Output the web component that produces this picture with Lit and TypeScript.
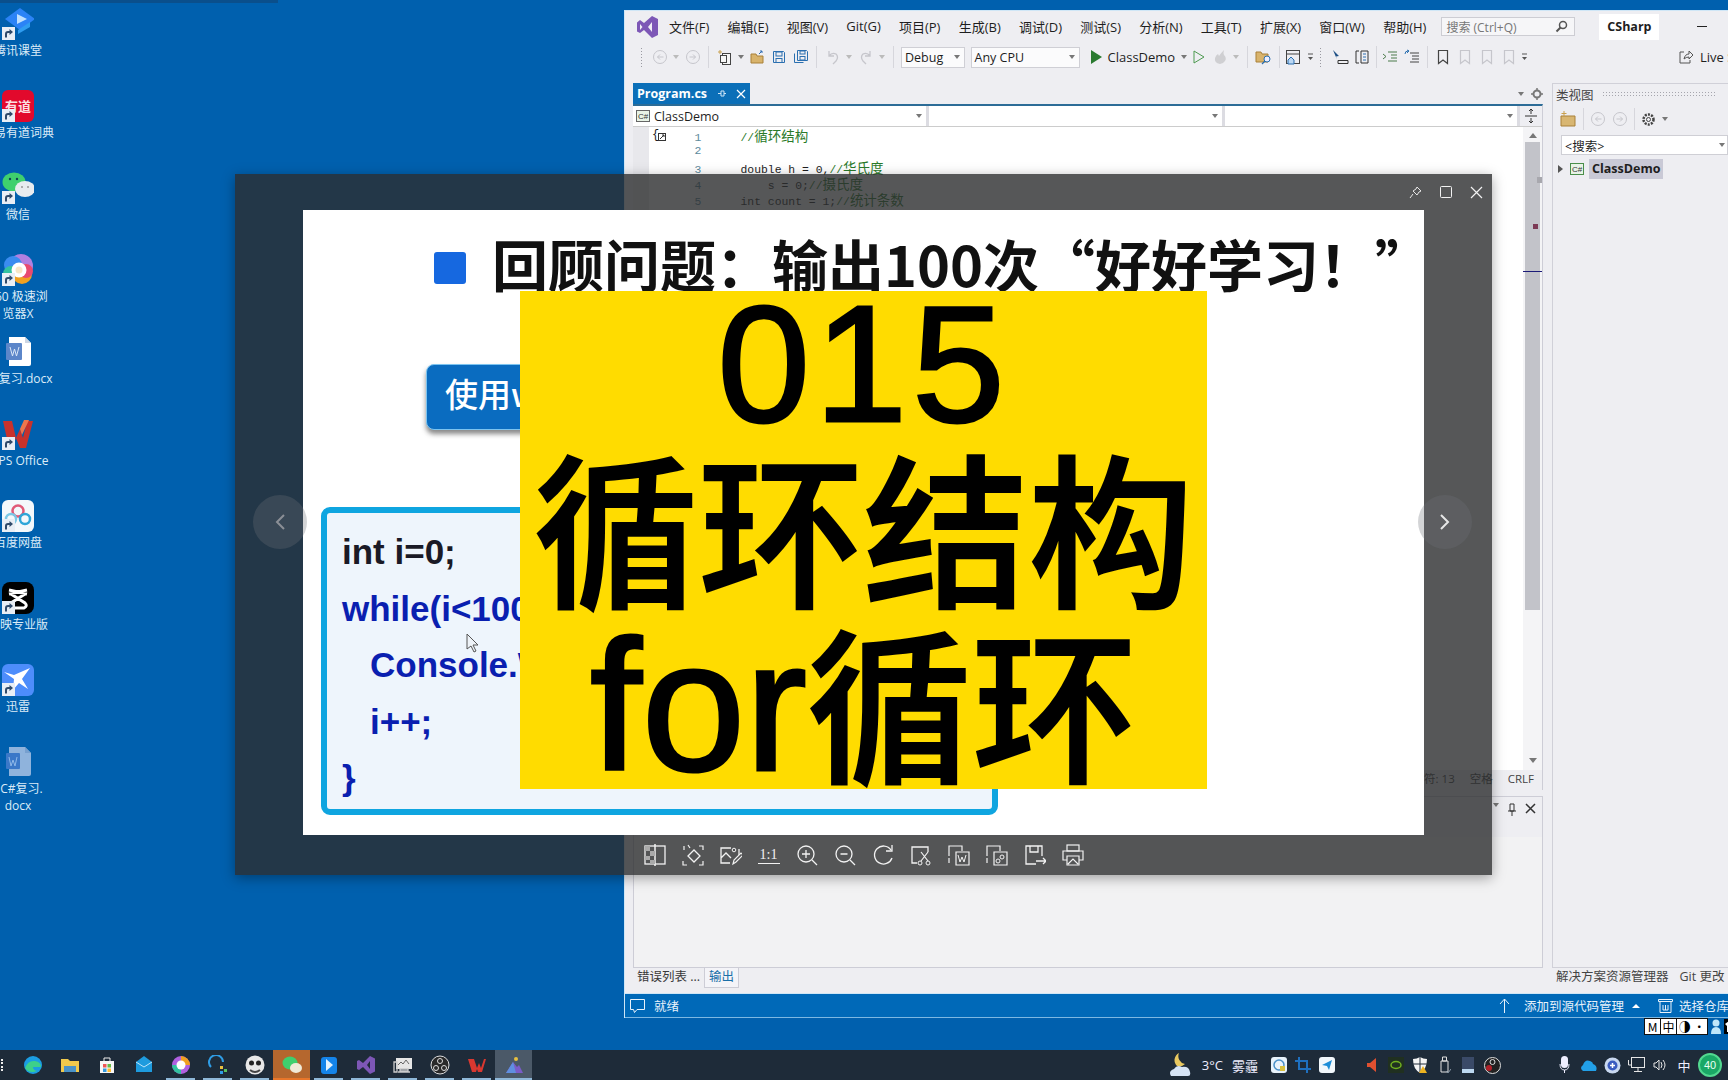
import { LitElement, html, svg, css } from "lit";
import { customElement } from "lit/decorators.js";

const mk = (w: number, h: number, body: unknown, vb = `0 0 ${w} ${h}`) =>
  html`<svg width=${w} height=${h} viewBox=${vb} fill="none">${body}</svg>`;

// ---- desktop icons ----
const shortcut = html`<svg class="sc" width="13" height="13" viewBox="0 0 13 13"><rect width="13" height="13" fill="#e8eef5"/><path d="M3 10.500V7q0-3 3-3h1.500V2L11 5 7.500 8V6H6q-1 0-1 1v3.500z" fill="#2f4a6a"/></svg>`;

const deskIcons: { label: string[]; art: unknown; sc?: boolean }[] = [
  {
    label: ["腾讯课堂"],
    art: mk(32, 32, svg`<path d="M18 0l15 11-15 11L3 11z" fill="#2b83f6"/><path d="M15 6l10 5-10 5z" fill="#bfe0ff"/><path d="M16 26l12-7v-5l-12 8z" fill="#2f9df0"/>`),
  },
  {
    label: ["网易有道词典"],
    art: html`<div class="yd">有道</div>`,
  },
  {
    label: ["微信"],
    art: mk(32, 32, svg`<ellipse cx="12" cy="10" rx="11.500" ry="9.500" fill="#3fd06e"/><ellipse cx="23" cy="17" rx="10" ry="8" fill="#e8ecef"/><circle cx="8" cy="7" r="1.200" fill="#145"/><circle cx="15" cy="7" r="1.200" fill="#145"/><circle cx="20" cy="15" r="1" fill="#999"/><circle cx="26" cy="15" r="1" fill="#999"/>`),
  },
  {
    label: ["360 极速浏", "览器X"],
    art: mk(32, 32, svg`<circle cx="19" cy="12" r="12" fill="#b080e0"/><circle cx="11" cy="11" r="9" fill="#3a8cf0"/><circle cx="9" cy="20" r="8" fill="#33c2a0"/><circle cx="20" cy="20" r="10" fill="#f0a020"/><circle cx="24" cy="17" r="7" fill="#e84a70"/><circle cx="17" cy="16" r="7.500" fill="#fff"/><circle cx="17" cy="16" r="3.500" fill="#f6e7c8"/>`),
  },
  {
    label: ["C#复习.docx"],
    sc: false,
    art: mk(32, 32, svg`<path d="M7 1h16l6 6v21q0 2-2 2H7z" fill="#fff"/><path d="M23 1l6 6h-6z" fill="#cdd6e4"/><rect x="4" y="7" width="16" height="17" rx="1" fill="#5c86c9"/><path d="M8 11l2.500 9 2-7 2 7L17 11" stroke="#dbe7f7" stroke-width="1"/>`),
  },
  {
    label: ["WPS Office"],
    art: mk(32, 32, svg`<path d="M1 3h9l4 17 4-9 3 9 4-17h6l-7 27h-6l-4-10-4 10H7z" fill="#c8322c"/><path d="M18 11l4-9h5l-7 15z" fill="#f0764c"/>`),
  },
  {
    label: ["百度网盘"],
    art: html`<div class="tile white">${mk(32, 32, svg`<circle cx="16" cy="11" r="5.500" stroke="#e05a78" stroke-width="2.500"/><circle cx="23" cy="19" r="5" stroke="#2fa6d8" stroke-width="2.500"/><circle cx="9" cy="19" r="5" stroke="#7cc8e6" stroke-width="2.500"/>`)}</div>`,
  },
  {
    label: ["剪映专业版"],
    art: html`<div class="tile black">${mk(32, 32, svg`<path d="M7 8l18 4M25 8L7 12M9 12l14 9q3 3-1 5H10q-4-2-1-5l14-9" stroke="#fff" stroke-width="3"/>`)}</div>`,
  },
  {
    label: ["迅雷"],
    art: html`<div class="tile xl">${mk(32, 32, svg`<path d="M2 8l10 3L28 4 20 15l6 10-9-6-6 7 1-11z" fill="#fff"/>`)}</div>`,
  },
  {
    label: ["$C#复习.", "docx"],
    sc: false,
    art: mk(32, 32, svg`<path d="M7 1h16l6 6v21q0 2-2 2H7z" fill="#8fb3dc"/><path d="M23 1l6 6h-6z" fill="#77a0cf"/><rect x="4" y="7" width="14" height="16" rx="1" fill="#3b78c8"/><path d="M7 11l2 9 2-6 2 6 2-9" stroke="#8fb8e8" stroke-width="1"/>`),
  },
];

@customElement("desktop-icons")
export class DesktopIcons extends LitElement {
  static styles = css`
    :host { position: absolute; left: -37px; top: 8px; display: flex; flex-direction: column; width: 110px; }
    .item { height: 82px; display: flex; flex-direction: column; align-items: center; }
    .art { position: relative; width: 32px; height: 32px; margin-bottom: 2px; flex: none; }
    svg { display: block; }
    .sc { position: absolute; left: 0; bottom: 0; }
    .label { color: #dcecf8; font-size: 12px; line-height: 17px; text-align: center; white-space: nowrap; }
    .yd { width: 32px; height: 32px; border-radius: 6px; background: #e2092c; color: #fbdfe2; font: 700 13px/32px "Noto Sans CJK SC", sans-serif; text-align: center; }
    .tile { width: 32px; height: 32px; border-radius: 6px; overflow: hidden; }
    .white { background: #f4f8fb; }
    .black { background: #000; border-radius: 8px; }
    .xl { background: #4d8dfb; }
  `;
  render() {
    return deskIcons.map(
      (d) => html`<div class="item">
        <div class="art">${d.art}${d.sc === false ? "" : shortcut}</div>
        ${d.label.map((l) => html`<div class="label">${l}</div>`)}
      </div>`
    );
  }
}

// ---- visual studio ----
const dim = "#c6c6cc";
const ic = {
  back: (c: string) => mk(16, 16, svg`<circle cx="8" cy="8" r="6.500" stroke=${c}/><path d="M11.500 8h-6M8 5.500L5.500 8 8 10.500" stroke=${c}/>`),
  fwd: (c: string) => mk(16, 16, svg`<circle cx="8" cy="8" r="6.500" stroke=${c}/><path d="M4.500 8h6M8 5.500L10.500 8 8 10.500" stroke=${c}/>`),
  newProj: mk(16, 16, svg`<rect x="5.500" y="4.500" width="8" height="11" fill="#f6f6f6" stroke="#444"/><rect x="3.500" y="6.500" width="6" height="7" fill="#f6f6f6" stroke="#444"/><path d="M3 1v4M1 3h4" stroke="#c9a04e"/>`),
  folder: mk(16, 16, svg`<path d="M1 5h5l1 2h6v7H1z" fill="#d8b36c" stroke="#a98038"/><path d="M9 5l3-3M12 2h-2M12 2v2" stroke="#2f6db3"/>`),
  save: mk(16, 16, svg`<path d="M2.500 2.500h10l1 1v10h-11z" stroke="#2a6fb0"/><rect x="5" y="3" width="6" height="4" stroke="#2a6fb0"/><rect x="5" y="9.500" width="6" height="4" stroke="#2a6fb0"/>`),
  saveAll: mk(16, 16, svg`<path d="M1.500 4.500v9h9M4.500 1.500h9l1 1v9h-10z" stroke="#2a6fb0"/><rect x="7" y="2" width="5" height="3" stroke="#2a6fb0"/><rect x="7" y="7.500" width="5" height="3.500" stroke="#2a6fb0"/>`),
  undo: mk(16, 16, svg`<path d="M4 2v5h5M4 7q3-4 7-2 3 3 0 7l-3 3" stroke=${dim} stroke-width="1.300"/>`),
  redo: mk(16, 16, svg`<path d="M12 2v5H7M12 7q-3-4-7-2-3 3 0 7l3 3" stroke=${dim} stroke-width="1.300"/>`),
  play: mk(14, 16, svg`<path d="M1 1l11 7-11 7z" fill="#2a7a30"/>`),
  playO: mk(14, 16, svg`<path d="M2 2l10 6-10 6z" stroke="#4d9a50"/>`),
  flame: mk(16, 16, svg`<path d="M8 15q-6-1-5-6 1-3 3-4l1 2q2-3 5-6-1 3 0 5 3 3 1 6-2 3-5 3z" fill="#cfcfd2"/>`),
  folderFind: mk(18, 16, svg`<path d="M1 3h5l1 2h6v8H1z" fill="#d8b36c" stroke="#a98038"/><circle cx="12" cy="10" r="3" fill="#eef" stroke="#2a6fb0"/><path d="M10 12l-3 3" stroke="#2a6fb0" stroke-width="1.300"/>`),
  home: mk(16, 16, svg`<rect x="1.500" y="1.500" width="13" height="13" stroke="#444"/><path d="M1 5h14" stroke="#444"/><path d="M3 11l3-3 3 3v4H3z" fill="#bcd8f4" stroke="#2a6fb0"/>`),
  cursor: mk(18, 16, svg`<path d="M2 1l6 6-3 .5 1 3z" fill="#1d4f85"/><path d="M7 11.500h10v3H7z" stroke="#333"/>`),
  cols: mk(16, 16, svg`<path d="M5 2H2v12h3M7 2h7v12H7z" stroke="#333"/><path d="M9 5h3M9 8h3M9 11h3" stroke="#2a6fb0"/>`),
  indentA: mk(16, 16, svg`<path d="M6 3h9M9 6h6M9 9h6M6 12h9M1 5l3 2.500L1 10" stroke="#4b7a4b"/>`),
  indentB: mk(16, 16, svg`<path d="M6 4h9M8 7h7M8 10h7M6 13h9" stroke="#444"/><path d="M1 5q0-3 3-3h1M3 1L5 2 3 4" stroke="#2a6fb0"/>`),
  mark: (c: string) => mk(14, 16, svg`<path d="M2.500 1.500h9v13L7 11l-4.500 3.500z" stroke=${c} stroke-width="1.200"/>`),
  share: mk(16, 16, svg`<path d="M6 3H2v11h10v-3M6 10q1-5 5-5V2l4 4-4 4V8q-3 0-5 2z" stroke="#555"/>`),
  dd: html`<span class="dd"></span>`,
  ddLine: mk(7, 8, svg`<path d="M1 1h5" stroke="#555"/><path d="M1 4h5l-2.500 3z" fill="#555"/>`),
};
const vsLogo = mk(22, 24, svg`<path d="M16 1l6 3v16l-6 3-8-8-4 3-3-1.500v-9L4 5l4 3z" fill="#7d57b6"/><path d="M16 7l-4 5 4 5zM4 9v6l2.500-3z" fill="#f0eef5"/>`);
const csBadge = (c = "#4a8f4a") => mk(14, 12, svg`<rect x=".5" y=".5" width="13" height="11" fill="#e8f3e6" stroke=${c}/><text x="7" y="9" font-size="8" font-family="Liberation Sans" text-anchor="middle" fill="#333">C#</text>`);

const menus = ["文件(F)", "编辑(E)", "视图(V)", "Git(G)", "项目(P)", "生成(B)", "调试(D)", "测试(S)", "分析(N)", "工具(T)", "扩展(X)", "窗口(W)", "帮助(H)"];
const codeLines = [
  ["1", "", "//循环结构"],
  ["2", "", ""],
  ["3", "double h = 0,", "//华氏度"],
  ["4", "    s = 0;", "//摄氏度"],
  ["5", "int count = 1;", "//统计条数"],
];

@customElement("vs-window")
export class VsWindow extends LitElement {
  static styles = css`
    :host { position: absolute; left: 624px; top: 10px; right: 0; height: 1008px; display: flex; flex-direction: column; background: #eeeef2; color: #1e1e1e; font-size: 13px; border-top: 1px solid #cfe6f6; border-left: 1px solid #cfe6f6; box-sizing: border-box; overflow: hidden; }
    svg { display: block; flex: none; }
    .menu { height: 31px; flex: none; display: flex; align-items: center; padding-left: 11px; }
    .menu .logo { margin-right: 11px; }
    .items { display: flex; gap: 18.200px; white-space: nowrap; }
    .search { margin-left: 15px; width: 134px; height: 19px; box-sizing: border-box; background: #f6f6f8; border: 1px solid #cdcdd3; display: flex; align-items: center; justify-content: space-between; padding: 0 6px 0 4px; color: #777; font-size: 12px; white-space: nowrap; }
    .lang { margin-left: 24px; width: 60px; height: 26px; background: #fff; font-weight: 700; font-size: 12.500px; display: flex; align-items: center; justify-content: center; }
    .min { margin-left: 38px; width: 10px; border-top: 1px solid #222; }

    .tools { height: 30px; flex: none; display: flex; align-items: center; gap: 5.500px; padding-left: 15px; white-space: nowrap; }
    .grip { width: 3px; height: 20px; background-image: radial-gradient(#9a9aa2 .6px, transparent .8px); background-size: 3px 3px; margin-right: 3px; }
    .sep { width: 1px; height: 22px; background: #d6d6dc; margin: 0 2px; }
    .sep.tight { margin: 0; }
    .dd { width: 0; height: 0; border: 3.500px solid transparent; border-top: 4px solid #777; border-bottom: 0; display: block; flex: none; }
    .dd.off { border-top-color: #bbb; }
    .combo { height: 21px; box-sizing: border-box; background: #fbfbfc; border: 1px solid #cfcfd5; display: flex; align-items: center; justify-content: space-between; padding: 0 4px 0 3px; font-size: 12.500px; }
    .debug { width: 64px; }
    .cpu { width: 109px; margin-right: 5px; }
    .target { margin-left: -2px; }
    .marks { display: flex; gap: 8px; }
    .live { margin-left: auto; display: flex; gap: 6px; align-items: center; font-size: 13px; width: 50px; overflow: hidden; flex: none; }

    .body { flex: 1; display: flex; min-height: 0; padding: 11px 0 0 8px; }
    .main { width: 910px; flex: none; display: flex; flex-direction: column; }
    .tabbar { height: 21px; flex: none; display: flex; align-items: stretch; justify-content: space-between; }
    .tab { width: 117px; background: #0b6fb8; color: #fff; font-weight: 700; font-size: 12.500px; display: flex; align-items: center; padding-left: 4px; gap: 10px; box-sizing: border-box; }
    .wellbtns { display: flex; align-items: center; gap: 7px; padding-right: 0; }
    .doc { height: 686px; flex: none; border-top: 2px solid #2c6c97; border-right: 1px solid #cdcdd6; display: flex; flex-direction: column; box-sizing: border-box; background: #fff; }
    .nav { height: 20px; flex: none; display: flex; gap: 3px; background: #dcdce2; border-bottom: 1px solid #ccc; }
    .nav div { background: #fff; height: 20px; display: flex; align-items: center; justify-content: space-between; box-sizing: border-box; padding: 0 4px 0 3px; font-size: 12.500px; }
    .nav .a { width: 293px; gap: 4px; justify-content: flex-start; }
    .nav .a .name { flex: 1; }
    .nav .b { width: 293px; }
    .nav .c { width: 292px; }
    .nav .split { flex: 1; background: #eeeef2; justify-content: center; padding: 0; }
    .editor { flex: 1; display: flex; min-height: 0; }
    .margin { width: 16px; background: #e8e8ec; flex: none; }
    .outline { width: 14px; padding: 1px 0 0 3px; font: 12px/14px "Liberation Mono", monospace; flex: none; display: flex; align-items: flex-start; }
    .outline svg { margin: 5px 0 0 -1px; }
    .code { flex: 1; padding-top: 0; font: 11.400px/16px "Liberation Mono", "Noto Sans CJK SC", monospace; }
    .ln { display: flex; align-items: baseline; white-space: pre; height: 16px; }
    .ln i { font-style: normal; width: 25px; margin-left: 28.500px; margin-right: 21px; color: #5d8a9c; text-align: left; }
    .cm { color: #2a7a2a; }
    .cm b { font-weight: 400; font-size: 13.500px; line-height: 16px; font-family: "Noto Sans CJK SC", sans-serif; }
    .scroll { width: 19px; flex: none; background: #f4f4f6; position: relative; display: flex; flex-direction: column; align-items: center; padding-top: 6px; box-sizing: border-box; }
    .up { border: 4px solid transparent; border-bottom: 5px solid #777; border-top: 0; }
    .thumb { width: 15px; height: 468px; margin-top: 4px; background: #c2c3c9; flex: none; }
    .dn { margin-top: auto; margin-bottom: 7px; border: 4px solid transparent; border-top: 5px solid #777; border-bottom: 0; }
    .mk { position: absolute; }
    .mk.red { left: 10px; top: 97px; width: 5px; height: 5px; background: #7c3a55; }
    .mk.line { left: 0; top: 144px; width: 19px; height: 1px; background: #1b1b78; }
    .mk.gray { left: 14px; top: 50px; width: 5px; height: 6px; background: #a8a8ae; }
    .docfoot { height: 20px; flex: none; background: #eeeef2; display: flex; justify-content: flex-end; align-items: center; gap: 15px; padding-right: 8px; font-size: 11.500px; color: #444; line-height: 16px; padding-bottom: 3px; box-sizing: border-box; }
    .output { margin-top: 6px; height: 172px; flex: none; border: 1px solid #cdcdd6; background: #f2f2f3; box-sizing: border-box; }
    .ohead { height: 40px; background: #eeeef2; display: flex; justify-content: flex-end; gap: 8px; padding: 6px 6px 0 0; box-sizing: border-box; }
    .btabs { height: 22px; flex: none; display: flex; font-size: 12.500px; }
    .btabs span { padding: 0 4px; line-height: 18px; height: 20px; white-space: nowrap; color: #3a3a3a; }
    .btabs .on { background: #f4f4f8; color: #1a6fa8; border: 1px solid #cdcdd6; border-top: 0; box-sizing: border-box; }

    .side { margin-left: 9px; flex: 1; display: flex; flex-direction: column; min-width: 0; }
    .panel { height: 885px; flex: none; border: 1px solid #d0d0d8; border-width: 1px 0 1px 1px; box-sizing: border-box; background: #eeeef2; }
    .ptitle { height: 20px; display: flex; align-items: center; gap: 8px; padding: 0 0 0 3px; font-size: 12.500px; color: #444; white-space: nowrap; }
    .ptitle i { flex: 1; height: 7px; margin-right: 12px; background-image: radial-gradient(#a6a6ae .6px, transparent .8px); background-size: 3px 3px; }
    .ptools { height: 30px; display: flex; align-items: center; gap: 6px; padding-left: 6px; }
    .ptools .sep { margin: 0; }
    .psearch { margin: 1px 0 0 8px; height: 20px; background: #fff; border: 1px solid #cfcfd5; display: flex; align-items: center; justify-content: space-between; padding: 0 2px 0 3px; font-size: 12.500px; box-sizing: border-box; }
    .tree { display: flex; align-items: center; margin: 4px 0 0 5px; height: 20px; }
    .tree .tri { width: 0; height: 0; border: 4px solid transparent; border-left: 5px solid #555; border-right: 0; margin-right: 7px; }
    .tree b { margin-left: 5px; padding: 0 3px; background: #c9c9d6; font-size: 12.500px; line-height: 20px; }
    .stabs { height: 22px; display: flex; gap: 11px; padding-left: 4px; font-size: 12.500px; color: #444; line-height: 18px; white-space: nowrap; }

    .status { height: 25px; flex: none; background: #0069b8; color: #e8f2fb; display: flex; align-items: center; padding-left: 5px; font-size: 12.500px; white-space: nowrap; border-top: 1px solid #cfe6f6; border-bottom: 1px solid #7db8e2; box-sizing: border-box; margin-left: -1px; }
    .status .ready { margin-left: 8px; }
    .status .right { margin-left: auto; display: flex; align-items: center; gap: 6px; width: 229px; overflow: hidden; flex: none; }
    .status .right svg:first-child { margin-right: 8px; }
    .status .up2 { border: 4px solid transparent; border-bottom: 4px solid #fff; border-top: 0; margin: 0 12px 0 2px; }
  `;
  render() {
    return html`
      <div class="menu">
        <div class="logo">${vsLogo}</div>
        <div class="items">${menus.map((m) => html`<span>${m}</span>`)}</div>
        <div class="search"><span>搜索 (Ctrl+Q)</span>${mk(13, 13, svg`<circle cx="8" cy="5" r="3.500" stroke="#555" stroke-width="1.500"/><path d="M5.500 7.500L1.500 11.500" stroke="#555" stroke-width="2"/>`)}</div>
        <div class="lang">CSharp</div>
        <div class="min"></div>
      </div>
      <div class="tools">
        <span class="grip"></span>${ic.back(dim)}<span class="dd off"></span>${ic.fwd(dim)}<span class="sep"></span>
        ${ic.newProj}${ic.dd}${ic.folder}${ic.save}${ic.saveAll}<span class="sep"></span>
        ${ic.undo}<span class="dd off"></span>${ic.redo}<span class="dd off"></span><span class="sep"></span>
        <div class="combo debug"><span>Debug</span>${ic.dd}</div>
        <div class="combo cpu"><span>Any CPU</span>${ic.dd}</div>
        ${ic.play}<span class="target">ClassDemo</span>${ic.dd}${ic.playO}${ic.flame}<span class="dd off"></span><span class="sep"></span>
        ${ic.folderFind}<span class="sep tight"></span>${ic.home}${ic.ddLine}<span class="grip"></span>${ic.cursor}${ic.cols}<span class="sep tight"></span>
        ${ic.indentA}${ic.indentB}<span class="sep"></span>
        <div class="marks">${ic.mark("#444")}${ic.mark(dim)}${ic.mark(dim)}${ic.mark(dim)}</div>${ic.ddLine}
        <div class="live">${ic.share}<span>Live Share</span></div>
      </div>
      <div class="body">
        <div class="main">
          <div class="tabbar">
            <div class="tab"><span>Program.cs</span>
              ${mk(9, 9, svg`<path d="M1 4.500h3M4 2v5h3V2zM7 4.500h2" stroke="#cfe6f8"/>`)}
              ${mk(10, 10, svg`<path d="M1 1l8 8M9 1L1 9" stroke="#fff" stroke-width="1.200"/>`)}
            </div>
            <div class="wellbtns">${ic.dd}${mk(12, 12, svg`<circle cx="6" cy="6" r="3.500" stroke="#777" stroke-width="2"/><path d="M6 0v2M6 10v2M0 6h2M10 6h2" stroke="#777" stroke-width="1.500"/>`)}</div>
          </div>
          <div class="doc">
            <div class="nav">
              <div class="a">${csBadge("#666")}<span class="name">ClassDemo</span>${ic.dd}</div>
              <div class="b"><span></span>${ic.dd}</div>
              <div class="c"><span></span>${ic.dd}</div>
              <div class="split">${mk(12, 14, svg`<path d="M0 7h12M6 0v5M6 14V9M4 2l2-2 2 2M4 12l2 2 2-2" stroke="#333"/>`)}</div>
            </div>
            <div class="editor">
              <div class="margin"></div>
              <div class="outline">{${mk(8, 8, svg`<rect x=".5" y=".5" width="7" height="7" stroke="#333"/><path d="M2 6l4-4M4 2h2v2" stroke="#333"/>`)}</div>
              <div class="code">
                ${codeLines.map(([n, t, c]) => html`<div class="ln"><i>${n}</i><span>${t}</span>${this.comment(c)}</div>`)}
              </div>
              <div class="scroll">
                <span class="up"></span><div class="thumb"></div><span class="dn"></span>
                <span class="mk gray"></span><span class="mk red"></span><span class="mk line"></span>
              </div>
            </div>
            <div class="docfoot"><span>字符: 13</span><span>空格</span><span>CRLF</span></div>
          </div>
          <div class="output">
            <div class="ohead">${ic.dd}${mk(10, 14, svg`<path d="M3 1h4v7H3zM1 8h8M5 8v5" stroke="#333"/>`)}${mk(11, 11, svg`<path d="M1 1l9 9M10 1l-9 9" stroke="#333" stroke-width="1.500"/>`)}</div>
          </div>
          <div class="btabs"><span>错误列表 ...</span><span class="on">输出</span></div>
        </div>
        <div class="side">
          <div class="panel">
            <div class="ptitle"><span>类视图</span><i></i></div>
            <div class="ptools">
              ${mk(18, 18, svg`<path d="M2 6h14v10H2z" fill="#d8b672" stroke="#a98038"/><path d="M5 1v5M2.500 3.500h5" stroke="#c9a04e"/>`)}
              <span class="sep"></span>${ic.back(dim)}${ic.fwd(dim)}<span class="sep"></span>
              ${mk(15, 15, svg`<circle cx="7.500" cy="7.500" r="5" stroke="#444" stroke-dasharray="2 1.200" stroke-width="2.500"/><circle cx="7.500" cy="7.500" r="2" stroke="#444"/>`)}${ic.dd}
            </div>
            <div class="psearch"><span>&lt;搜索&gt;</span>${ic.dd}</div>
            <div class="tree"><span class="tri"></span>${csBadge()}<b>ClassDemo</b></div>
          </div>
          <div class="stabs"><span>解决方案资源管理器</span><span>Git 更改</span></div>
        </div>
      </div>
      <div class="status">
        ${mk(17, 17, svg`<path d="M1.500 2.500h14v10H8l-2.500 3-1-3h-3z" stroke="#e8f2fb"/>`)}
        <span class="ready">就绪</span>
        <div class="right">
          ${mk(11, 15, svg`<path d="M5.500 15V1M1 6l4.500-5L10 6" stroke="#e8f2fb"/>`)}
          <span>添加到源代码管理</span><span class="up2"></span>
          ${mk(15, 14, svg`<path d="M.5.5h14v2H.5zM2 2.500v11h11v-11M5 6v5h5V6M7.500 6v5" stroke="#e8f2fb"/>`)}
          <span>选择仓库</span>
        </div>
      </div>
    `;
  }
  comment(c: string) {
    // 注释里的汉字比等宽的拉丁字母宽,单独放大
    if (!c) return "";
    return html`<span class="cm">//<b>${c.slice(2)}</b></span>`;
  }
}

// ---- image viewer ----
const tb = (body: unknown) => mk(22, 22, body);
const viewerTools = [
  tb(svg`<rect x="1" y="2" width="20" height="18" stroke="#f2f2f2" stroke-width="1.300"/><path d="M11 0v22" stroke="#f2f2f2" stroke-width="1.500"/><path d="M1 2h5v5H1zM6 7h5v5H6zM1 12h5v4H1zM6 16h5v4H6z" fill="#aaa"/>`),
  tb(svg`<path d="M6 12l6-6 6 6-6 6z" stroke="#f2f2f2" stroke-width="1.300"/><path d="M2 6V2M6 1L8 4M17 2h4v4M1 17v4h4M21 17v4h-4" stroke="#f2f2f2" stroke-width="1.200"/>`),
  tb(svg`<path d="M11 4H1v15h9M19 5v6M1 14l5-5 5 5" stroke="#f2f2f2" stroke-width="1.300"/><path d="M13 20l1-4 7-7 2 2-7 7z" stroke="#f2f2f2" stroke-width="1.200"/><circle cx="14" cy="6" r="1.800" stroke="#f2f2f2"/>`),
  html`<span class="one">1:1</span>`,
  tb(svg`<circle cx="10" cy="10" r="8" stroke="#f2f2f2" stroke-width="1.300"/><path d="M6 10h8M10 6v8M16 16l5 5" stroke="#f2f2f2" stroke-width="1.300"/>`),
  tb(svg`<circle cx="10" cy="10" r="8" stroke="#f2f2f2" stroke-width="1.300"/><path d="M6.500 10h7M16 16l5 5" stroke="#f2f2f2" stroke-width="1.300"/>`),
  tb(svg`<path d="M19 6a9 9 0 1 0 1 8" stroke="#f2f2f2" stroke-width="1.300"/><path d="M20 1v6h-6" stroke="#f2f2f2" stroke-width="1.300"/>`),
  tb(svg`<path d="M7 19H2V3h16v5" stroke="#f2f2f2" stroke-width="1.300"/><path d="M11 8l7 9M18 8l-7 9" stroke="#f2f2f2" stroke-width="1.200"/><circle cx="10" cy="19" r="2" stroke="#f2f2f2"/><circle cx="18" cy="19" r="2" stroke="#f2f2f2"/>`),
  tb(svg`<path d="M1 12V2h13v5M1 14v5M8 8h13v13H8z" stroke="#f2f2f2" stroke-width="1.200"/><path d="M10 11l2 7 2-5 2 5 2-7" stroke="#f2f2f2"/>`),
  tb(svg`<path d="M1 12V2h13v5M1 14v5M8 8h13v13H8z" stroke="#f2f2f2" stroke-width="1.200"/><circle cx="16" cy="13" r="2" stroke="#f2f2f2"/><circle cx="12" cy="17" r="2" stroke="#f2f2f2"/>`),
  tb(svg`<path d="M12 20H2V2h16v10M6 2v6h8V2M12 17h10M19 14l3 3-3 3" stroke="#f2f2f2" stroke-width="1.300"/>`),
  tb(svg`<rect x="5" y="1" width="12" height="6" stroke="#f2f2f2" stroke-width="1.200"/><path d="M5 16H1V7h20v9h-4" stroke="#f2f2f2" stroke-width="1.200"/><path d="M5 12h12v9H5zM6 20l5-5 5 5" stroke="#f2f2f2" stroke-width="1.200"/>`),
];

@customElement("image-viewer")
export class ImageViewer extends LitElement {
  static styles = css`
    :host { position: absolute; left: 235px; top: 174px; width: 1257px; height: 701px; display: flex; flex-direction: column; background: rgba(44, 45, 46, 0.8); box-shadow: 0 3px 12px rgba(0, 0, 0, 0.35); }
    svg { display: block; flex: none; }
    .bar { height: 36px; flex: none; display: flex; justify-content: flex-end; align-items: center; gap: 18px; padding-right: 9px; }
    .stage { flex: 1; position: relative; padding: 0 68px; min-height: 0; }
    .slide { position: relative; height: 625px; background: #fff; overflow: hidden; }
    .head { display: flex; align-items: center; gap: 26px; height: 60px; padding: 28px 0 0 131px; white-space: nowrap; }
    .bullet { width: 32px; height: 32px; border-radius: 3px; background: #1668e0; flex: none; }
    .title { font: 700 56px/60px "Noto Sans CJK SC", sans-serif; color: #111; margin-bottom: 10px; }
    .btn { margin: 66px 0 0 123px; height: 66px; width: 420px; box-sizing: border-box; background: #0a6cc0; border: 1px solid #7cc4f0; border-radius: 8px; box-shadow: 0 4px 5px rgba(40, 40, 40, 0.55); color: #fff; font: 500 33px/56px "Noto Sans CJK SC", sans-serif; padding-left: 18px; }
    .codebox { margin: 77px 0 0 18px; width: 677px; height: 308px; box-sizing: border-box; border: 6px solid #0fa5e0; border-radius: 9px; background: #eef5fc; padding: 11px 0 0 15px; font: 700 35px/56.500px "Liberation Sans", "Noto Sans CJK SC", sans-serif; color: #0a1fb0; white-space: nowrap; }
    .codebox .k { color: #1a1a26; }
    .codebox .in { padding-left: 28px; }
    .cover { position: absolute; left: 217px; top: 81px; width: 687px; height: 498px; background: #ffdc00; color: #000; display: flex; flex-direction: column; align-items: center; font: 400 166px/166px "Liberation Sans", "Noto Sans CJK SC", sans-serif; white-space: nowrap; -webkit-text-stroke: 3px #000; }
    .cover b { font-weight: 500; font-size: 165px; font-family: "Noto Sans CJK SC", sans-serif; -webkit-text-stroke: 2px #000; }
    .cover .r1 { margin-top: -10px; letter-spacing: 5px; }
    .cover .r2 { margin-top: -6px; }
    .cover .r3 { margin-top: -5px; }
    .cover .for { font-size: 186px; }
    .arrow { position: absolute; top: 285px; width: 54px; height: 54px; border-radius: 50%; background: rgba(110, 112, 118, 0.3); display: flex; align-items: center; justify-content: center; }
    .prev { left: 18px; }
    .next { right: 20px; }
    .cursor { position: absolute; left: 163px; top: 423px; }
    .foot { height: 40px; flex: none; display: flex; align-items: center; justify-content: center; gap: 16px; }
    .one { width: 22px; color: #f2f2f2; font: 14px/17px "Liberation Serif", serif; text-align: center; border-bottom: 1px solid #f2f2f2; }
  `;
  render() {
    return html`
      <div class="bar">
        ${mk(13, 13, svg`<path d="M8 1l4 4-2 1-2 3-4-4 3-2zM4 8l-3 4" stroke="#e8e8e8"/>`)}
        ${mk(12, 12, svg`<rect x=".5" y=".5" width="11" height="11" rx="1" stroke="#f2f2f2"/>`)}
        ${mk(13, 13, svg`<path d="M1 1l11 11M12 1L1 12" stroke="#f2f2f2" stroke-width="1.200"/>`)}
      </div>
      <div class="stage">
        <div class="slide">
          <div class="head"><span class="bullet"></span><span class="title">回顾问题：输出100次“好好学习！”</span></div>
          <div class="btn">使用while循环</div>
          <div class="codebox">
            <div class="k">int i=0;</div>
            <div>while(i&lt;100){</div>
            <div class="in">Console.WriteLine("好好学习！");</div>
            <div class="in">i++;</div>
            <div>}</div>
          </div>
          <div class="cover">
            <div class="r1">015</div>
            <div class="r2"><b>循环结构</b></div>
            <div class="r3"><span class="for">for</span><b>循环</b></div>
          </div>
          <div class="cursor">${mk(14, 20, svg`<path d="M1 1v15l4-3 3 6 2-1-3-6h5z" fill="#eef3f8" stroke="#555"/>`)}</div>
        </div>
        <div class="arrow prev">${mk(12, 18, svg`<path d="M10 2L3 9l7 7" stroke="#8b8f96" stroke-width="2"/>`)}</div>
        <div class="arrow next">${mk(12, 18, svg`<path d="M2 2l7 7-7 7" stroke="#e6e6e6" stroke-width="2"/>`)}</div>
      </div>
      <div class="foot">${viewerTools}</div>
    `;
  }
}

// ---- taskbar ----
const tk = (body: unknown) => mk(20, 20, body);
const taskIcons = [
  { art: tk(svg`<circle cx="10" cy="10" r="9" fill="#1b9de2"/><path d="M2 13q3-8 10-7 6 1 6 6h-8q0 3 4 4-8 3-12-3z" fill="#3dd08a"/>`) },
  { art: tk(svg`<path d="M1 4h7l2 2h9v11H1z" fill="#f0c94c"/><rect x="4" y="11" width="12" height="6" fill="#4a93c8"/>`) },
  { art: tk(svg`<path d="M3 6h14v12H3z" fill="#f6f6f6"/><path d="M7 6V3h6v3" stroke="#eee"/><rect x="6" y="9" width="3.500" height="3.500" fill="#e55"/><rect x="10.500" y="9" width="3.500" height="3.500" fill="#6b4"/><rect x="6" y="13.500" width="3.500" height="3.500" fill="#39d"/><rect x="10.500" y="13.500" width="3.500" height="3.500" fill="#fb3"/>`) },
  { art: tk(svg`<path d="M2 7l8-6 8 6v10H2z" fill="#1e9bde"/><path d="M2 7l8 5 8-5" stroke="#bfe6fa"/>`) },
  { on: 1, art: tk(svg`<circle cx="10" cy="10" r="9" fill="#b060e0"/><path d="M10 1a9 9 0 0 1 9 9h-9z" fill="#f0a020"/><path d="M1 10a9 9 0 0 0 9 9v-9z" fill="#33c2a0"/><circle cx="10" cy="10" r="4.500" fill="#fff"/>`) },
  { on: 1, art: tk(svg`<path d="M3 12a7 7 0 1 1 12-5" stroke="#2f9de6" stroke-width="2"/><rect x="12" y="11" width="3" height="3" fill="#e8c040"/><rect x="16" y="14" width="3" height="3" fill="#5ac060"/><rect x="12" y="16" width="3" height="3" fill="#2f9de6"/>`) },
  { on: 1, art: tk(svg`<circle cx="10" cy="10" r="9.500" fill="#e8e8e8"/><circle cx="6.500" cy="8" r="2.500" fill="#222"/><circle cx="13.500" cy="8" r="2.500" fill="#222"/><path d="M5 15q5 4 10 0" stroke="#444" stroke-width="2"/>`) },
  { on: 2, art: tk(svg`<ellipse cx="8" cy="8" rx="7.500" ry="6.500" fill="#3fd06e"/><ellipse cx="14" cy="13" rx="6" ry="5" fill="#f0ead8"/>`) },
  { on: 1, art: tk(svg`<rect x="2" y="2" width="16" height="17" rx="3" fill="#1484ea"/><path d="M7 4l7 6-7 6z" fill="#e4f3ff"/>`) },
  { on: 1, art: tk(svg`<path d="M14 1l5 2.500v13L14 19 7 12l-4 3-2-1V6l2-1 4 3z" fill="#7d57b6"/><path d="M14 6l-3 4 3 4z" fill="#1e2a38"/>`) },
  { on: 1, art: tk(svg`<rect x="3" y="3" width="16" height="11" fill="#e6e6e6"/><path d="M5 10l3-3 2 2 3-4 3 4" stroke="#666"/><path d="M1 7h3v10H1zM7 14h8v2H7zM5 17h12" stroke="#ccc" stroke-width="1.300"/>`) },
  { on: 1, art: tk(svg`<circle cx="10" cy="10" r="9" fill="#2a2a2a" stroke="#ddd"/><circle cx="10" cy="6" r="2.500" stroke="#ddd"/><circle cx="6" cy="13" r="2.500" stroke="#ddd"/><circle cx="14" cy="13" r="2.500" stroke="#ddd"/>`) },
  { on: 1, art: tk(svg`<path d="M1 4h6l3 9 2-5 2 5 3-9h2l-4 13h-4l-1-3-1 3H5z" fill="#d83830"/>`) },
  { on: 3, art: tk(svg`<path d="M2 18L9 7l4 5 2-2 4 8z" fill="#7a5cc8"/><path d="M2 18L9 7l3 11z" fill="#5f8fe0"/><circle cx="12" cy="4" r="2" fill="#e8c040"/>`) },
];

const tray = {
  weather: mk(24, 24, svg`<path d="M10 0a8 8 0 0 0 6 11 8 8 0 0 1-8 2 8 8 0 0 1 2-13z" fill="#e8c860"/><path d="M2 23q-3-5 3-7 3-5 8-2 7-1 8 5 1 4-2 4z" fill="#d6e4f6"/>`),
  app: mk(16, 16, svg`<rect width="16" height="16" rx="3" fill="#e8f2fb"/><circle cx="8" cy="8" r="5" stroke="#4a90c8" stroke-width="1.500"/><rect x="9" y="9" width="5" height="5" fill="#d8c040"/>`),
  crop: mk(16, 16, svg`<path d="M4 0v12h12M0 4h12v12" stroke="#1e70c0" stroke-width="2"/>`),
  blue: mk(16, 16, svg`<rect width="16" height="16" rx="3" fill="#f2f8fc"/><path d="M3 8l10-5-3 10-2-4z" fill="#1e8ed8"/>`),
  vol: mk(12, 16, svg`<path d="M1 6h3l6-5v14l-6-5H1z" fill="#e05030"/>`),
  nv: mk(16, 16, svg`<rect width="16" height="16" fill="#203020"/><ellipse cx="8" cy="8" rx="5" ry="3.500" stroke="#70b020" stroke-width="1.500"/>`),
  shield: mk(16, 17, svg`<path d="M8 0q3 2 7 2 0 10-7 14Q1 12 1 2q4 0 7-2z" fill="#f4f4f4"/><path d="M8 0v16M1 7h14" stroke="#1e2a38"/><path d="M11 9l4 7H7z" fill="#eeb420"/>`),
  usb: mk(14, 18, svg`<path d="M4 5h7v11H4zM5.500 1h4v4h-4z" stroke="#e0e0e0"/><path d="M9 15l2 2 3-4" stroke="#8a9aa8"/>`),
  tablet: mk(12, 16, svg`<rect width="12" height="16" fill="#3a4a68"/><rect y="12" width="12" height="4" fill="#bcd8f0"/>`),
  obs: mk(17, 17, svg`<circle cx="8.500" cy="8.500" r="8" fill="#222" stroke="#ddd"/><circle cx="8.500" cy="5" r="2.500" stroke="#ddd"/><circle cx="5" cy="11" r="3" fill="#b02028"/>`),
  mic: mk(11, 18, svg`<rect x="2" y="0" width="7" height="12" rx="3.500" fill="#eef"/><path d="M1 8q0 6 4.500 6T10 8M5.500 14v3" stroke="#eef"/>`),
  cloud: mk(17, 12, svg`<path d="M3 12q-4-3 0-6 2-6 7-4 3 1 3 3 5 2 3 7z" fill="#22a0e8"/>`),
  plus: mk(17, 17, svg`<circle cx="8.500" cy="8.500" r="8" fill="#c8d8f0"/><circle cx="8.500" cy="8.500" r="5" fill="#3a5cc0"/><path d="M8.500 6v5M6 8.500h5" stroke="#fff" stroke-width="1.500"/>`),
  net: mk(17, 16, svg`<rect x="3.500" y=".5" width="13" height="10" stroke="#e6e6e6"/><path d="M.5 3v5h3M10 11v3M6 14.500h8" stroke="#e6e6e6"/>`),
  sound: mk(14, 14, svg`<path d="M1 5h2l3-3v10L3 9H1zM8 4q2 3 0 6M10 2q4 5 0 10" stroke="#e6e6e6"/>`),
};

@customElement("task-bar")
export class TaskBar extends LitElement {
  static styles = css`
    :host { position: absolute; left: 0; right: 0; bottom: 0; height: 30px; background: #1e2b39; display: flex; align-items: stretch; color: #eef; }
    svg { display: block; flex: none; }
    .search { width: 3px; margin: 9px 11px 9px 0; border-right: 2px dotted #eee; box-sizing: border-box; flex: none; }
    .cell { width: 37px; flex: none; display: flex; align-items: center; justify-content: center; position: relative; }
    .cell.on1::after, .cell.on2::after, .cell.on3::after { content: ""; position: absolute; bottom: 0; left: 4px; right: 4px; height: 2px; background: #8fb8d8; }
    .cell.on2 { background: #b5672e; }
    .cell.on2::after { left: 0; right: 0; background: #e8762a; }
    .cell.on3 { background: #4b5968; }
    .cell.on3::after { left: 0; right: 0; }
    .tray { margin-left: auto; display: flex; align-items: center; padding-right: 4px; font-size: 13px; white-space: nowrap; }
    .weather { display: flex; align-items: center; gap: 9px; margin-right: 9px; }
    .t { width: 24px; display: flex; justify-content: center; align-items: center; flex: none; }
    .g2 { margin-left: 21px; display: flex; }
    .g3 { margin-left: 48px; display: flex; }
    .badge { width: 24px; height: 24px; margin: 0 2px; border-radius: 50%; background: #1aa866; border: 2px solid #52d890; box-sizing: border-box; font: 11px/20px "Liberation Sans", sans-serif; text-align: center; color: #e8fff2; }
  `;
  render() {
    return html`
      <div class="search"></div>
      ${taskIcons.map((t) => html`<div class="cell ${t.on ? "on" + t.on : ""}">${t.art}</div>`)}
      <div class="tray">
        <div class="weather">${tray.weather}<span>3°C</span><span>雾霾</span></div>
        <div class="t">${tray.app}</div><div class="t">${tray.crop}</div><div class="t">${tray.blue}</div>
        <div class="g2">
          <div class="t">${tray.vol}</div><div class="t">${tray.nv}</div><div class="t">${tray.shield}</div>
          <div class="t">${tray.usb}</div><div class="t">${tray.tablet}</div><div class="t">${tray.obs}</div>
        </div>
        <div class="g3">
          <div class="t">${tray.mic}</div><div class="t">${tray.cloud}</div><div class="t">${tray.plus}</div>
          <div class="t">${tray.net}</div><div class="t">${tray.sound}</div><div class="t">中</div>
        </div>
        <div class="badge">40</div>
      </div>
    `;
  }
}

@customElement("app-root")
export class AppRoot extends LitElement {
  static styles = css`
    :host { display: block; position: relative; width: 1728px; height: 1080px; overflow: hidden; background: #0060ae; font-family: "Open Sans", "Noto Sans CJK SC", sans-serif; }
    .topstrip { position: absolute; left: 0; top: 0; width: 278px; height: 3px; background: #0a4f8c; }
    .ime-bar { position: absolute; left: 1644px; top: 1018px; display: flex; align-items: center; gap: 2px; height: 16px; }
    .ime-box { display: flex; background: #fff; border: 1px solid #111; height: 15px; color: #000; font: 12px/15px "Noto Sans CJK SC", sans-serif; }
    .ime-box span { width: 15px; text-align: center; border-right: 1px solid #111; }
    .ime-box span:last-child { border: 0; width: 30px; }
    .shirt { background: #000; width: 15px; height: 15px; display: flex; align-items: center; justify-content: center; }
    svg { display: block; flex: none; }
  `;
  render() {
    return html`
      <div class="topstrip"></div>
      <desktop-icons></desktop-icons>
      <vs-window></vs-window>
      <image-viewer></image-viewer>
      <div class="ime-bar">
        <div class="ime-box"><span>M</span><span>中</span><span>◑ ·</span></div>
        ${mk(12, 15, svg`<circle cx="6" cy="4" r="3.500" fill="#bfe6fa"/><path d="M1 15q0-7 5-7t5 7z" fill="#bfe6fa"/>`)}
        <div class="shirt">${mk(13, 11, svg`<path d="M4 0h5l4 3-2 2v6H2V5L0 3z" fill="#fff"/>`)}</div>
      </div>
      <task-bar></task-bar>
    `;
  }
}
